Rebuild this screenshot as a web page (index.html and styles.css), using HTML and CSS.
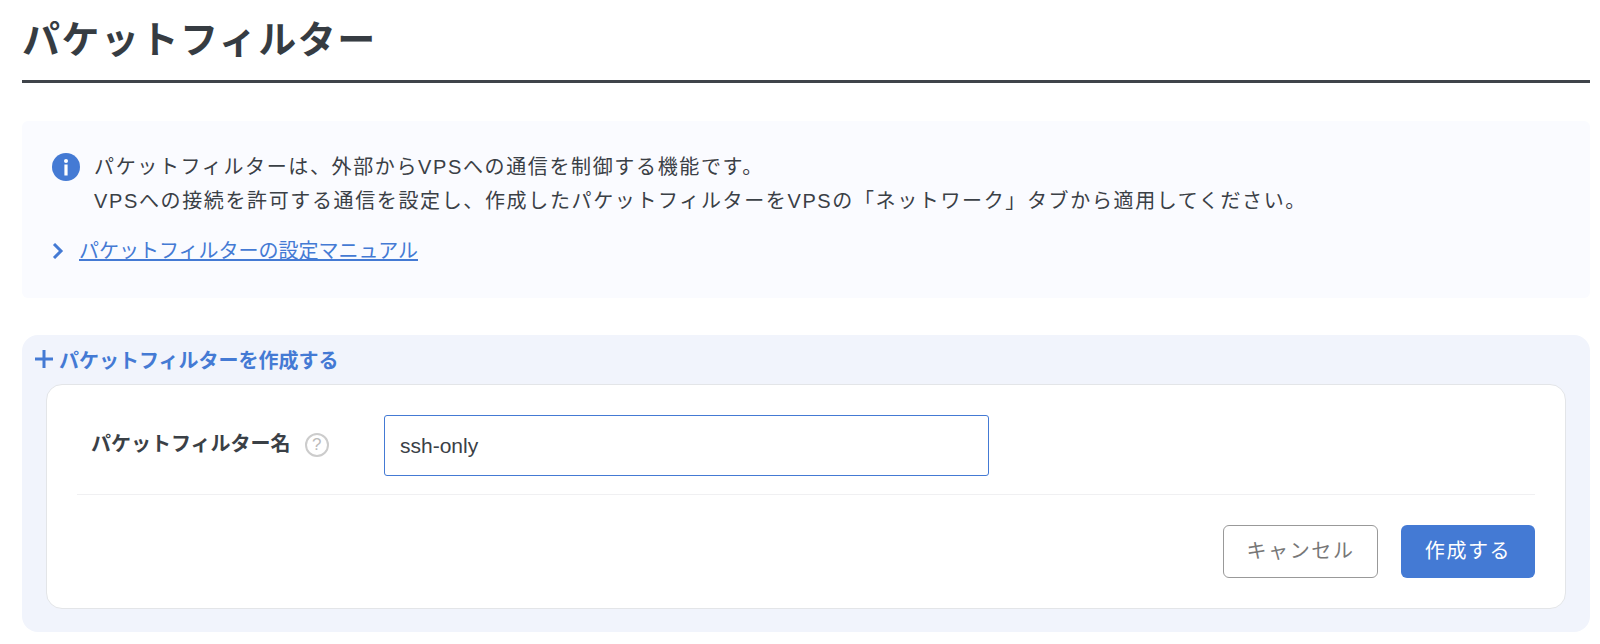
FILE: index.html
```html
<!DOCTYPE html>
<html lang="ja">

<head>
  <meta charset="UTF-8">
  <title>パケットフィルター</title>
  <link rel="stylesheet" href="styles.css">
</head>

<body>
  <div class="page">
    <h1 class="page-title">パケットフィルター</h1>

    <div class="notice">
      <div class="notice-body">
        <svg class="notice-icon" width="28" height="28" viewBox="0 0 28 28">
          <circle cx="14" cy="14" r="14" fill="#447ad4" />
          <circle cx="14" cy="8" r="2" fill="#fff" />
          <rect x="12.4" y="11.5" width="3.2" height="11" fill="#fff" />
        </svg>
        <p class="notice-text">パケットフィルターは、外部からVPSへの通信を制御する機能です。<br>VPSへの接続を許可する通信を設定し、作成したパケットフィルターをVPSの「ネットワーク」タブから適用してください。</p>
      </div>
      <div class="notice-link">
        <svg class="chevron" width="12" height="16" viewBox="0 0 12 16">
          <path d="M2 1 L9 8 L2 15" fill="none" stroke="#447ad4" stroke-width="3" />
        </svg>
        <a href="#">パケットフィルターの設定マニュアル</a>
      </div>
    </div>

    <div class="create-box">
      <div class="create-head">
        <svg width="18" height="18" viewBox="0 0 18 18">
          <path d="M0 9 H18 M9 0 V18" stroke="#447ad4" stroke-width="3" />
        </svg>
        <span>パケットフィルターを作成する</span>
      </div>
      <div class="create-card">
        <div class="form-row">
          <div class="form-label">
            <span class="form-label-text">パケットフィルター名</span>
            <span class="help">?</span>
          </div>
          <input class="form-input" type="text" value="ssh-only">
        </div>
        <div class="form-actions">
          <button class="btn btn-cancel">キャンセル</button>
          <button class="btn btn-primary">作成する</button>
        </div>
      </div>
    </div>
  </div>
</body>

</html>
```

FILE: styles.css
```css
* {
  margin: 0;
  padding: 0;
  box-sizing: border-box;
}

body {
  background-color: #fff;
  color: #3a4046;
  font-family: "Liberation Sans", "Noto Sans CJK JP", sans-serif;
  overflow: hidden;
}

.page {
  padding: 0 10px 0 22px;
}

.page-title {
  height: 83px;
  padding-top: 16px;
  font-size: 38px;
  line-height: 48px;
  font-weight: 700;
  letter-spacing: 1.5px;
  color: #363c42;
  border-bottom: 3px solid #3f444a;
}

.notice {
  height: 177px;
  margin-top: 38px;
  padding: 29px 30px 0;
  background-color: #fafbff;
  border-radius: 6px;
}

.notice-body {
  display: flex;
  gap: 14px;
}

.notice-icon {
  flex-shrink: 0;
  margin-top: 3px;
}

.notice-text {
  font-size: 20px;
  line-height: 34px;
  letter-spacing: 1.63px;
}

.notice-link {
  display: flex;
  align-items: center;
  gap: 15px;
  margin-top: 16px;
  font-size: 20px;
  line-height: 34px;
}

.notice-link a {
  color: #447ad4;
}

.create-box {
  height: 297px;
  margin-top: 37px;
  padding: 9px 24px 0;
  background-color: #f1f4fc;
  border-radius: 16px;
}

.create-head {
  display: flex;
  align-items: center;
  gap: 6px;
  margin-left: -11px;
  height: 30px;
  font-size: 20px;
  font-weight: 700;
  color: #447ad4;
}

.create-card {
  height: 225px;
  margin-top: 10px;
  padding: 0 30px;
  background-color: #fff;
  border: 1px solid #e3e5e8;
  border-radius: 16px;
}

.form-row {
  display: flex;
  align-items: center;
  height: 110px;
  padding: 12px 0 0 14px;
  border-bottom: 1px solid #f0f0f2;
}

.form-label {
  display: flex;
  align-items: center;
  gap: 14px;
  width: 293px;
  margin-bottom: 2px;
  font-size: 20px;
  font-weight: 700;
}

.form-label-text {
  padding-bottom: 4px;
}

.help {
  display: flex;
  align-items: center;
  justify-content: center;
  width: 24px;
  height: 24px;
  font-size: 17px;
  font-weight: 400;
  color: #bbb;
  border: 2px solid #ccc;
  border-radius: 50%;
}

.form-input {
  width: 605px;
  height: 61px;
  padding: 0 15px 0 15px;
  font-family: inherit;
  font-size: 21px;
  color: #3a4046;
  border: 1px solid #447ad4;
  border-radius: 3px;
  outline: none;
}

.form-actions {
  display: flex;
  justify-content: flex-end;
  gap: 23px;
  margin-top: 30px;
}

.btn {
  height: 53px;
  padding-bottom: 4px;
  font-family: inherit;
  font-size: 20px;
  letter-spacing: 1.6px;
  border-radius: 6px;
  cursor: pointer;
}

.btn-cancel {
  width: 155px;
  color: #777;
  background-color: #fff;
  border: 1px solid #999;
}

.btn-primary {
  width: 134px;
  color: #fff;
  background-color: #447ad4;
  border: none;
}
```
